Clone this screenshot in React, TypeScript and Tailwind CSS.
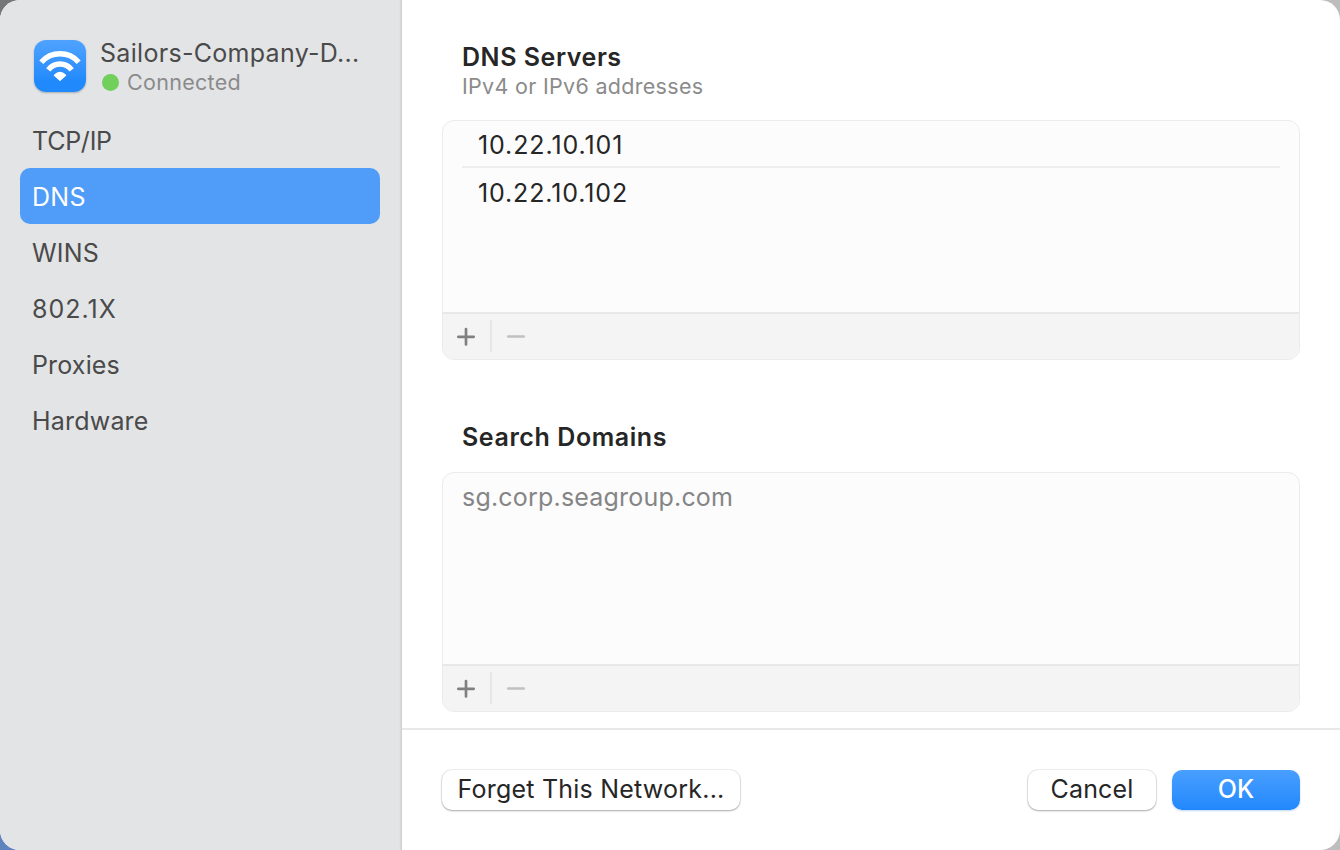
import type { ReactNode } from 'react';

const tabs = [
  { label: 'TCP/IP', cls: 'tracking-[-0.25px]' },
  { label: 'DNS', cls: 'tracking-[0.3px]' },
  { label: 'WINS', cls: 'tracking-[0.2px]' },
  { label: '802.1X', cls: 'tracking-[1px]' },
  { label: 'Proxies', cls: 'tracking-[0.15px]' },
  { label: 'Hardware', cls: 'tracking-[0.2px]' },
];

function WifiBadge() {
  return (
    <div className="mt-[2px] h-[52px] w-[52px] shrink-0 rounded-[12px] bg-linear-to-b from-[#4fa3ff] to-[#2089fc] to-80% shadow-[0_1px_2px_rgba(0,0,0,0.25)]">
      <svg viewBox="0 0 52 52" className="h-full w-full" fill="none">
        <path d="M7.3 22.2A25 25 0 0 1 44.7 22.2" stroke="white" strokeWidth="5.4" />
        <path d="M14.3 29.8A14.7 14.7 0 0 1 37.7 29.8" stroke="white" strokeWidth="5.3" />
        <path d="M26 40.4L20.4 35.2Q26 29.6 31.6 35.2Z" fill="white" stroke="white" strokeWidth="1.2" strokeLinejoin="round" />
      </svg>
    </div>
  );
}

function ListBox({ children }: { children: ReactNode }) {
  return (
    <div className="flex h-[240px] flex-col overflow-hidden rounded-[12px] border border-[#ebebeb] bg-[#fcfcfc]">
      <div className="flex-1">{children}</div>
      <div className="flex h-[47px] items-center border-t-2 border-[#e8e8e8] bg-[#f4f4f4]">
        <button aria-label="Add" className="flex w-[47px] justify-center">
          <svg width="21" height="21" viewBox="0 0 21 21" stroke="#808080" strokeWidth="2.7" strokeLinecap="round">
            <path d="M2.3 10.8H17.7M10 3.1V18.5" />
          </svg>
        </button>
        <span className="mb-[2px] h-8 w-[2px] bg-[#e6e6e6]" />
        <button aria-label="Remove" className="flex w-12 justify-center">
          <svg width="20" height="21" viewBox="0 0 20 21" stroke="#c0c0c0" strokeWidth="2.7" strokeLinecap="round">
            <path d="M2.3 10.5H17.7" />
          </svg>
        </button>
      </div>
    </div>
  );
}

const plainButton =
  'flex h-10 items-center justify-center rounded-[10px] bg-white pb-[3px] shadow-[0_0_0_1px_rgba(0,0,0,0.06),0_1px_2px_rgba(0,0,0,0.3)]';

export default function App() {
  return (
    <div className="h-[850px] w-[1340px] overflow-hidden bg-[conic-gradient(#bdbdbd_0_50%,#5f83bd_50%_75%,#777777_75%)] font-['Inter','Liberation_Sans',sans-serif] text-[25px] leading-8 whitespace-nowrap text-[#262626]">
      <div className="flex h-full w-full overflow-hidden rounded-[20px] bg-white">
        <aside className="w-[402px] shrink-0 bg-[linear-gradient(to_right,#e3e4e6_399px,#dcdddf_400px,#d4d5d6_401px,#cccccd_402px)] pl-5 text-[#4a4a4a]">
          <header className="flex h-[168px] pt-[38px] pl-[14px]">
            <WifiBadge />
            <div className="pl-[14px]">
              <div className="-mt-px tracking-[0.3px]">Sailors-Company-D...</div>
              <div className="-mt-px flex items-center text-[21.5px] leading-7 text-[#8b8b8c]">
                <span className="mr-[8px] ml-[2px] h-[17px] w-[17px] rounded-full bg-[#70d05b]" />
                <span className="tracking-[0.3px]">Connected</span>
              </div>
            </div>
          </header>
          <nav className="-mt-14 w-[360px]">
            {tabs.map((t) => (
              <div
                key={t.label}
                className={`flex h-14 items-center rounded-[10px] pl-3 pt-px ${t.cls} ${t.label === 'DNS' ? 'bg-[#509cf9] text-white' : ''}`}
              >
                {t.label}
              </div>
            ))}
          </nav>
        </aside>
        <main className="flex min-w-0 flex-1 flex-col">
          <div className="h-[728px] px-10 pt-[41px]">
            <h2 className="pl-5 font-semibold tracking-[0.55px]">DNS Servers</h2>
            <p className="-mt-px h-12 pl-5 text-[21.5px] leading-7 tracking-[0.3px] text-[#8b8b8b]">IPv4 or IPv6 addresses</p>
            <ListBox>
              <div className="ml-[19px] mr-[19px] h-[47px] border-b-2 border-[#eeeeee] pt-2 pl-4 tracking-[0.9px]">10.22.10.101</div>
              <div className="pt-[9px] pl-[35px] tracking-[0.87px]">10.22.10.102</div>
            </ListBox>
            <h2 className="mt-[61px] mb-[19px] pl-5 font-semibold tracking-[0.58px]">Search Domains</h2>
            <ListBox>
              <div className="pt-2 pl-[19px] tracking-[0.2px] text-[#858585]">sg.corp.seagroup.com</div>
            </ListBox>
          </div>
          <footer className="flex flex-1 items-start border-t-2 border-[#e8e8e8] px-10 pt-10">
            <button className={`${plainButton} w-[298px] tracking-[0.22px]`}>Forget This Network...</button>
            <button className={`${plainButton} mr-4 ml-auto w-32 tracking-[0.15px]`}>Cancel</button>
            <button className="flex h-10 w-32 items-center justify-center rounded-[10px] bg-linear-to-b from-[#489fff] to-[#2088fc] pb-[3px] font-medium text-white shadow-[0_1px_2px_rgba(0,90,220,0.25)]">
              OK
            </button>
          </footer>
        </main>
      </div>
    </div>
  );
}
